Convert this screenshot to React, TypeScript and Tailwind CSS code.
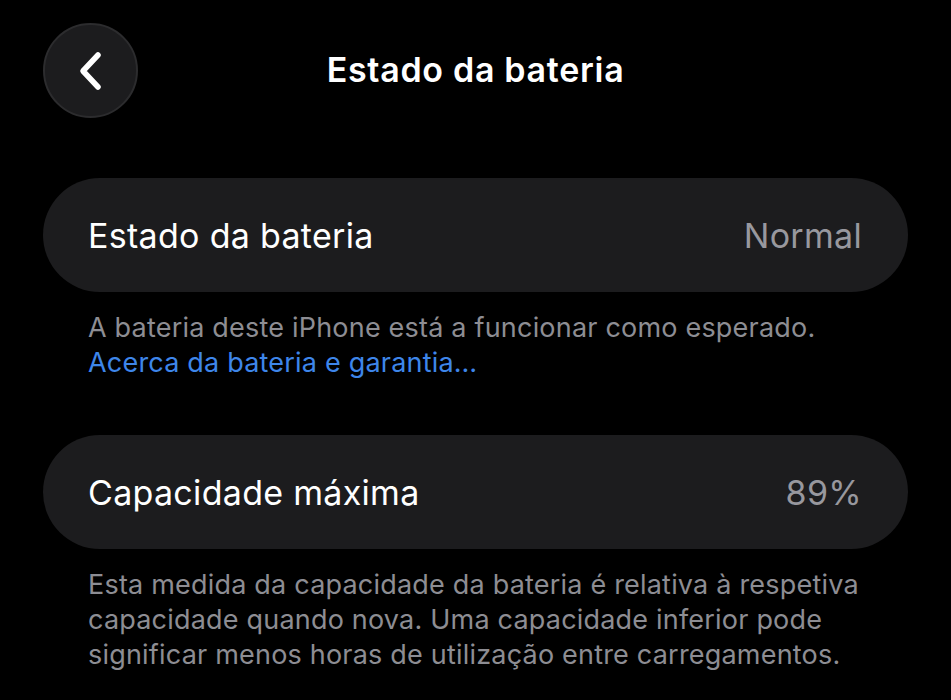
import React from 'react';

const Row = ({ label, value }: { label: string; value: string }) => (
  <div className="flex h-[114px] items-center justify-between rounded-full bg-[#1c1c1e] pl-[45px] pr-[46px]">
    <span className="text-[34px] tracking-[0.3px] text-white">{label}</span>
    <span className="text-[34px] tracking-[0.3px] text-[#98989e]">{value}</span>
  </div>
);

export default function App() {
  return (
    <div
      className="h-[700px] w-[951px] overflow-hidden bg-black px-[43px]"
      style={{ fontFamily: 'Inter, "Noto Sans", sans-serif' }}
    >
      {/* header */}
      <div className="relative flex h-[140px] items-start pt-[23px]">
        <button className="flex h-[95px] w-[95px] items-center justify-center rounded-full border-2 border-[#2c2c2e] bg-[#1c1c1e]">
          <svg width="30" height="42" viewBox="0 0 30 42" fill="none">
            <path d="M22 5 L7 21 L22 37" stroke="white" strokeWidth="5.5" strokeLinecap="round" strokeLinejoin="round" />
          </svg>
        </button>
        <h1 className="absolute left-0 right-0 top-[44px] text-center text-[34px] font-semibold tracking-[0.7px] text-white">
          Estado da bateria
        </h1>
      </div>

      <div className="mt-[38px]">
        <Row label="Estado da bateria" value="Normal" />
        <p className="mt-[18px] pl-[45px] text-[27px] leading-[35px] tracking-[0.2px] text-[#8d8d93]">
          A bateria deste iPhone está a funcionar como esperado.
          <br />
          <span className="text-[#3e86ea]">Acerca da bateria e garantia…</span>
        </p>
      </div>

      <div className="mt-[55px]">
        <Row label="Capacidade máxima" value="89%" />
        <p className="mt-[18px] pl-[45px] text-[27px] leading-[35px] tracking-[0.2px] text-[#8d8d93]">
          Esta medida da capacidade da bateria é relativa à respetiva
          <br />
          capacidade quando nova. Uma capacidade inferior pode
          <br />
          significar menos horas de utilização entre carregamentos.
        </p>
      </div>
    </div>
  );
}
